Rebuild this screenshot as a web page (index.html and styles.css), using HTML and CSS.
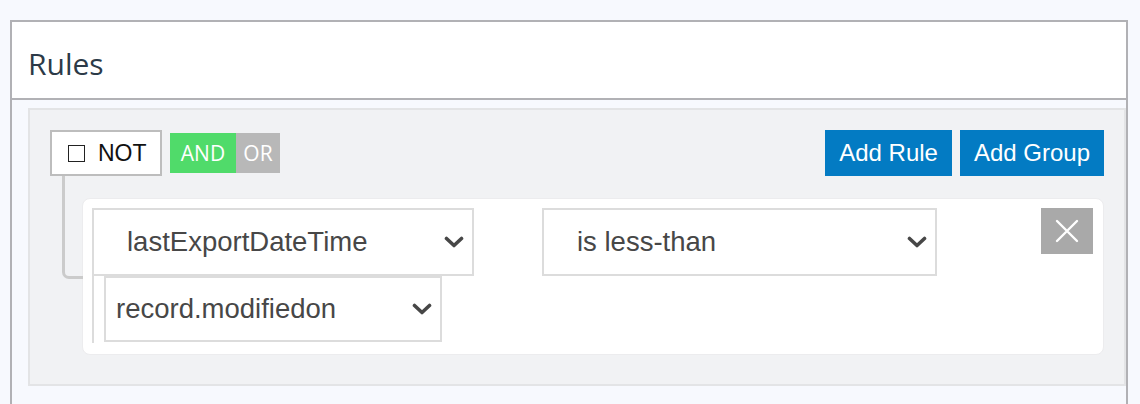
FILE: index.html
```html
<!DOCTYPE html>
<html>
<head>
<meta charset="utf-8">
<link rel="stylesheet" href="styles.css">
</head>
<body>
<div class="panel">
  <div class="panel-header">Rules</div>
  <div class="panel-body">
    <div class="group">
      <div class="group-header">
        <div class="not-box"><span class="check"></span><span class="not-label">NOT</span></div>
        <div class="combinator">
          <span class="comb comb-and">AND</span><span class="comb comb-or">OR</span>
        </div>
        <div class="actions">
          <button class="btn">Add Rule</button>
          <button class="btn">Add Group</button>
        </div>
      </div>
      <div class="rule">
        <div class="rule-row">
          <div class="select select-field"><span>lastExportDateTime</span>
            <svg class="chev" width="20" height="12" viewBox="0 0 20 12"><path d="M2.5 2.5 L10 9.5 L17.5 2.5" fill="none" stroke="#474747" stroke-width="3.6" stroke-linecap="round" stroke-linejoin="round"/></svg>
          </div>
          <div class="select select-op"><span>is less-than</span>
            <svg class="chev" width="20" height="12" viewBox="0 0 20 12"><path d="M2.5 2.5 L10 9.5 L17.5 2.5" fill="none" stroke="#474747" stroke-width="3.6" stroke-linecap="round" stroke-linejoin="round"/></svg>
          </div>
          <button class="remove">
            <svg width="24" height="24" viewBox="0 0 24 24"><path d="M2 2 L22 22 M22 2 L2 22" stroke="#fff" stroke-width="2.4" stroke-linecap="round"/></svg>
          </button>
        </div>
        <div class="value-row">
          <div class="select select-value"><span>record.modifiedon</span>
            <svg class="chev" width="20" height="12" viewBox="0 0 20 12"><path d="M2.5 2.5 L10 9.5 L17.5 2.5" fill="none" stroke="#474747" stroke-width="3.6" stroke-linecap="round" stroke-linejoin="round"/></svg>
          </div>
        </div>
      </div>
    </div>
  </div>
</div>
</body>
</html>
```
FILE: styles.css
```css
html, body {
  margin: 0;
  padding: 0;
  background: #f7f9fe;
}
body {
  font-family: "Liberation Sans", Arial, sans-serif;
  height: 404px;
  overflow: hidden;
}
.panel {
  margin: 20px 12px 0 10px;
  border: 2px solid #b1b1b5;
  border-bottom: none;
  height: 400px;
}
.panel-header {
  background: #fff;
  height: 78px;
  box-sizing: border-box;
  padding: 8px 0 0 16px;
  display: flex;
  align-items: center;
  font-family: "Open Sans", sans-serif;
  font-size: 30px;
  line-height: 1;
  color: #2c3a48;
  border-bottom: 2px solid #b1b1b5;
}
.panel-body {
  padding: 8px 0 0 16px;
}
.group {
  background: #f1f2f4;
  border: 2px solid #e3e4e6;
  padding: 20px 20px 30px 20px;
  height: 278px;
  box-sizing: border-box;
}
.group-header {
  display: flex;
  align-items: center;
  height: 46px;
}
.not-box {
  box-sizing: border-box;
  width: 112px;
  height: 46px;
  border: 2px solid #bdbdbd;
  background: #fff;
  display: flex;
  align-items: center;
  padding-left: 16px;
}
.check {
  width: 15px;
  height: 15px;
  border: 1.5px solid #222;
  margin-right: 13px;
}
.not-label {
  font-size: 23px;
  color: #111;
}
.combinator {
  display: flex;
  margin-left: 8px;
  height: 40px;
}
.comb {
  display: flex;
  align-items: center;
  justify-content: center;
  font-family: "Open Sans", sans-serif;
  font-size: 21px;
  color: #fff;
  height: 40px;
}
.comb-and {
  width: 66px;
  background: #50db6a;
}
.comb-or {
  width: 44px;
  background: #b8b8b8;
}
.actions {
  margin-left: auto;
  display: flex;
  gap: 8px;
}
.btn {
  border: none;
  background: #037bc3;
  color: #fff;
  font-family: "Liberation Sans", Arial, sans-serif;
  font-size: 24px;
  height: 46px;
  padding: 0 14px;
  margin: 0;
}
.rule {
  position: relative;
  margin: 22px 0 0 32px;
  background: #fff;
  border: 1px solid #ececee;
  border-radius: 8px;
  padding: 9px 10px 11px 9px;
}
.rule::before {
  content: "";
  position: absolute;
  left: -21px;
  top: -23px;
  width: 18px;
  height: 100px;
  border-left: 3px solid #cbcbcb;
  border-bottom: 3px solid #cbcbcb;
  border-bottom-left-radius: 7px;
}
.rule-row {
  display: flex;
  align-items: flex-start;
}
.select {
  box-sizing: border-box;
  border: 2px solid #dcdcdc;
  background: #fff;
  display: flex;
  align-items: center;
  justify-content: space-between;
  font-size: 27.5px;
  color: #474747;
  height: 68px;
}
.select-field {
  width: 382px;
  padding: 0 8px 0 33px;
}
.select-op {
  width: 395px;
  margin-left: 68px;
  padding: 0 8px 0 33px;
}
.select-value {
  width: 338px;
  height: 66px;
  padding: 0 8px 0 10px;
}
.chev {
  display: block;
}
.remove {
  margin-left: auto;
  width: 52px;
  height: 46px;
  border: none;
  background: #a9a9a9;
  display: flex;
  align-items: center;
  justify-content: center;
  padding: 0;
}
.value-row {
  border-left: 2px solid #dcdcdc;
  padding: 0 0 1px 10px;
}
```
